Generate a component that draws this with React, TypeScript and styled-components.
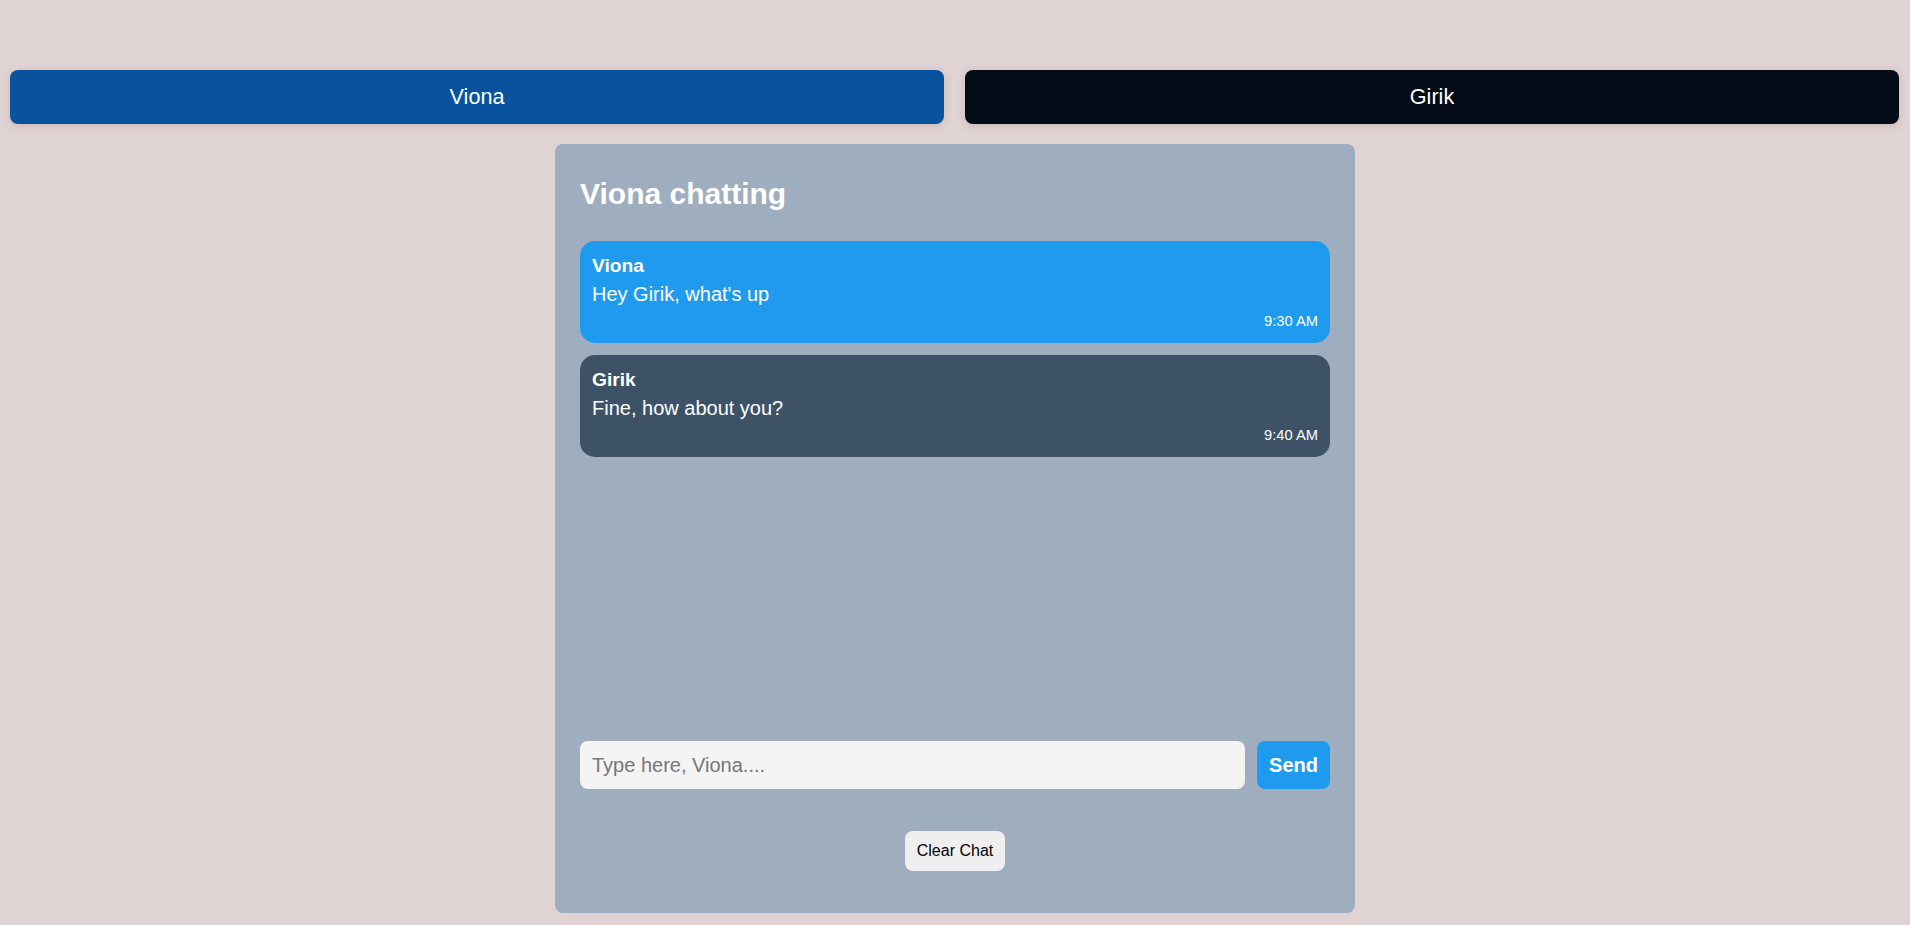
import React, { useState } from 'react';
import styled, { createGlobalStyle } from 'styled-components';

interface IMessage {
  id: number,
  sender: string,
  text: string,
  time: string
}

const initialMessages: IMessage[] = [
  { id: 1, sender: 'Viona', text: "Hey Girik, what's up", time: '9:30 AM' },
  { id: 2, sender: 'Girik', text: 'Fine, how about you?', time: '9:40 AM' },
];

const App = () => {
  const [user, setUser] = useState('Viona');
  const [messages, setMessages] = useState<IMessage[]>(initialMessages);
  const [draft, setDraft] = useState('');

  const send = () => {
    if (!draft.trim()) return;
    const now = new Date().toLocaleTimeString([], { hour: 'numeric', minute: '2-digit' });
    setMessages([...messages, { id: Date.now(), sender: user, text: draft, time: now }]);
    setDraft('');
  };

  return (
    <>
      <GlobalStyle />
      <UserBar>
        <UserButton $tone="blue" onClick={() => setUser('Viona')}>Viona</UserButton>
        <UserButton $tone="dark" onClick={() => setUser('Girik')}>Girik</UserButton>
      </UserBar>
      <Panel>
        <Heading>{user} chatting</Heading>
        <MessageList>
          {messages.map((m) => (
            <Bubble key={m.id} $own={m.sender === 'Viona'}>
              <Sender>{m.sender}</Sender>
              <Text>{m.text}</Text>
              <Time>{m.time}</Time>
            </Bubble>
          ))}
        </MessageList>
        <InputRow>
          <Input
            placeholder={`Type here, ${user}....`}
            value={draft}
            onChange={(e) => setDraft(e.target.value)}
            onKeyDown={(e) => e.key === 'Enter' && send()}
          />
          <SendButton onClick={send}>Send</SendButton>
        </InputRow>
        <ClearRow>
          <ClearButton onClick={() => setMessages([])}>Clear Chat</ClearButton>
        </ClearRow>
      </Panel>
    </>
  );
};

const GlobalStyle = createGlobalStyle`
  html, body {
    margin: 0;
    background: #e0d3d3;
    font-family: "Liberation Sans", Arial, sans-serif;
  }
  * {
    box-sizing: border-box;
  }
`;

const UserBar = styled.div`
  display: flex;
  gap: 21px;
  padding: 70px 11px 0 10px;
`;
const UserButton = styled.button<{ $tone: 'blue' | 'dark' }>`
  flex: 1;
  height: 54px;
  border: none;
  border-radius: 8px;
  background: ${(p) => (p.$tone === 'blue' ? '#08529e' : '#020b16')};
  color: white;
  font-family: inherit;
  font-size: 21.6px;
  cursor: pointer;
  box-shadow: 0px 2px 8px 0px rgba(120, 60, 60, 0.18);
`;
const Panel = styled.div`
  width: 800px;
  height: 769px;
  margin: 20px auto 0;
  padding: 25px;
  background: #9eaebe;
  border-radius: 8px;
  display: flex;
  flex-direction: column;
`;
const Heading = styled.h2`
  font-size: 30px;
  font-weight: 700;
  color: white;
  margin: 8px 0 30px;
`;
const MessageList = styled.div`
  flex: 1;
  display: flex;
  flex-direction: column;
  gap: 12px;
  overflow-y: auto;
`;
const Bubble = styled.div<{ $own: boolean }>`
  background: ${(p) => (p.$own ? '#1e9bef' : '#3d5267')};
  color: white;
  border-radius: 15px;
  padding: 14px 12px 14px;
`;
const Sender = styled.div`
  font-size: 19.2px;
  font-weight: 700;
  margin-bottom: 6px;
`;
const Text = styled.div`
  font-size: 20px;
  margin-bottom: 7px;
`;
const Time = styled.div`
  font-size: 14.7px;
  text-align: right;
`;
const InputRow = styled.div`
  display: flex;
  gap: 12px;
  height: 48px;
`;
const Input = styled.input`
  flex: 1;
  border: none;
  border-radius: 8px;
  background: #f4f4f4;
  padding: 0 12px;
  font-family: inherit;
  font-size: 20px;
  outline: none;
  &::placeholder {
    color: #767676;
  }
`;
const SendButton = styled.button`
  border: none;
  border-radius: 8px;
  background: #1e9bef;
  color: white;
  font-family: inherit;
  font-size: 20px;
  font-weight: 700;
  padding: 0 12px;
  cursor: pointer;
`;
const ClearRow = styled.div`
  display: flex;
  justify-content: center;
  margin: 42px 0 17px;
`;
const ClearButton = styled.button`
  border: none;
  border-radius: 8px;
  background: #efefef;
  color: black;
  font-family: inherit;
  font-size: 16px;
  padding: 11px 12px;
  cursor: pointer;
`;

export default App;
